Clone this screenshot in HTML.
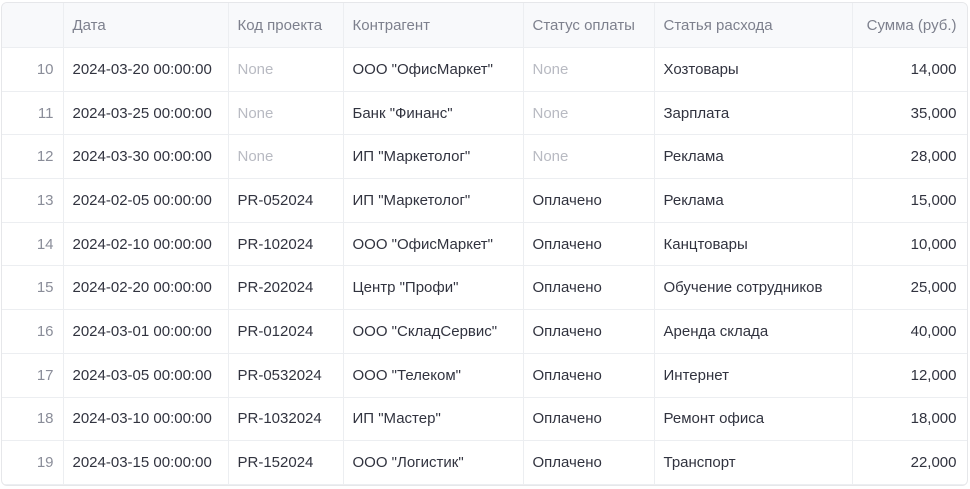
<!DOCTYPE html>
<html><head><meta charset="utf-8"><style>
body{margin:0;background:#fff;font-family:"Liberation Sans","DejaVu Sans",sans-serif;}
.wrap{position:absolute;left:1px;top:2px;width:965px;height:482px;border:1px solid #e6e7ea;border-radius:6px;overflow:hidden;}
table{border-collapse:collapse;table-layout:fixed;width:966px;font-size:15px;line-height:17px;color:#31333f;}
td,th{border-right:1px solid #eceef1;border-bottom:1px solid #eceef1;padding:0 9px;white-space:nowrap;overflow:hidden;height:42.7px;text-align:left;font-weight:normal;}
th{background:#f8f9fb;color:#7d808d;height:44px;}
td.i{color:#8a8d99;text-align:right;}
td.r{text-align:right;padding-right:11px;}
.n{color:#b8bac2;}
</style></head><body><div class="wrap"><table>
<colgroup><col style="width:61px"><col style="width:165px"><col style="width:115px"><col style="width:180px"><col style="width:131px"><col style="width:198px"><col style="width:116px"></colgroup>
<tr><th></th><th>Дата</th><th>Код проекта</th><th>Контрагент</th><th>Статус оплаты</th><th>Статья расхода</th><th style="text-align:right;padding-right:11px">Сумма (руб.)</th></tr>
<tr><td class="i">10</td><td>2024-03-20 00:00:00</td><td class="n">None</td><td>ООО "ОфисМаркет"</td><td class="n">None</td><td>Хозтовары</td><td class="r">14,000</td></tr>
<tr><td class="i">11</td><td>2024-03-25 00:00:00</td><td class="n">None</td><td>Банк "Финанс"</td><td class="n">None</td><td>Зарплата</td><td class="r">35,000</td></tr>
<tr><td class="i">12</td><td>2024-03-30 00:00:00</td><td class="n">None</td><td>ИП "Маркетолог"</td><td class="n">None</td><td>Реклама</td><td class="r">28,000</td></tr>
<tr><td class="i">13</td><td>2024-02-05 00:00:00</td><td>PR-052024</td><td>ИП "Маркетолог"</td><td>Оплачено</td><td>Реклама</td><td class="r">15,000</td></tr>
<tr><td class="i">14</td><td>2024-02-10 00:00:00</td><td>PR-102024</td><td>ООО "ОфисМаркет"</td><td>Оплачено</td><td>Канцтовары</td><td class="r">10,000</td></tr>
<tr><td class="i">15</td><td>2024-02-20 00:00:00</td><td>PR-202024</td><td>Центр "Профи"</td><td>Оплачено</td><td>Обучение сотрудников</td><td class="r">25,000</td></tr>
<tr><td class="i">16</td><td>2024-03-01 00:00:00</td><td>PR-012024</td><td>ООО "СкладСервис"</td><td>Оплачено</td><td>Аренда склада</td><td class="r">40,000</td></tr>
<tr><td class="i">17</td><td>2024-03-05 00:00:00</td><td>PR-0532024</td><td>ООО "Телеком"</td><td>Оплачено</td><td>Интернет</td><td class="r">12,000</td></tr>
<tr><td class="i">18</td><td>2024-03-10 00:00:00</td><td>PR-1032024</td><td>ИП "Мастер"</td><td>Оплачено</td><td>Ремонт офиса</td><td class="r">18,000</td></tr>
<tr><td class="i">19</td><td>2024-03-15 00:00:00</td><td>PR-152024</td><td>ООО "Логистик"</td><td>Оплачено</td><td>Транспорт</td><td class="r">22,000</td></tr>
</table></div></body></html>
